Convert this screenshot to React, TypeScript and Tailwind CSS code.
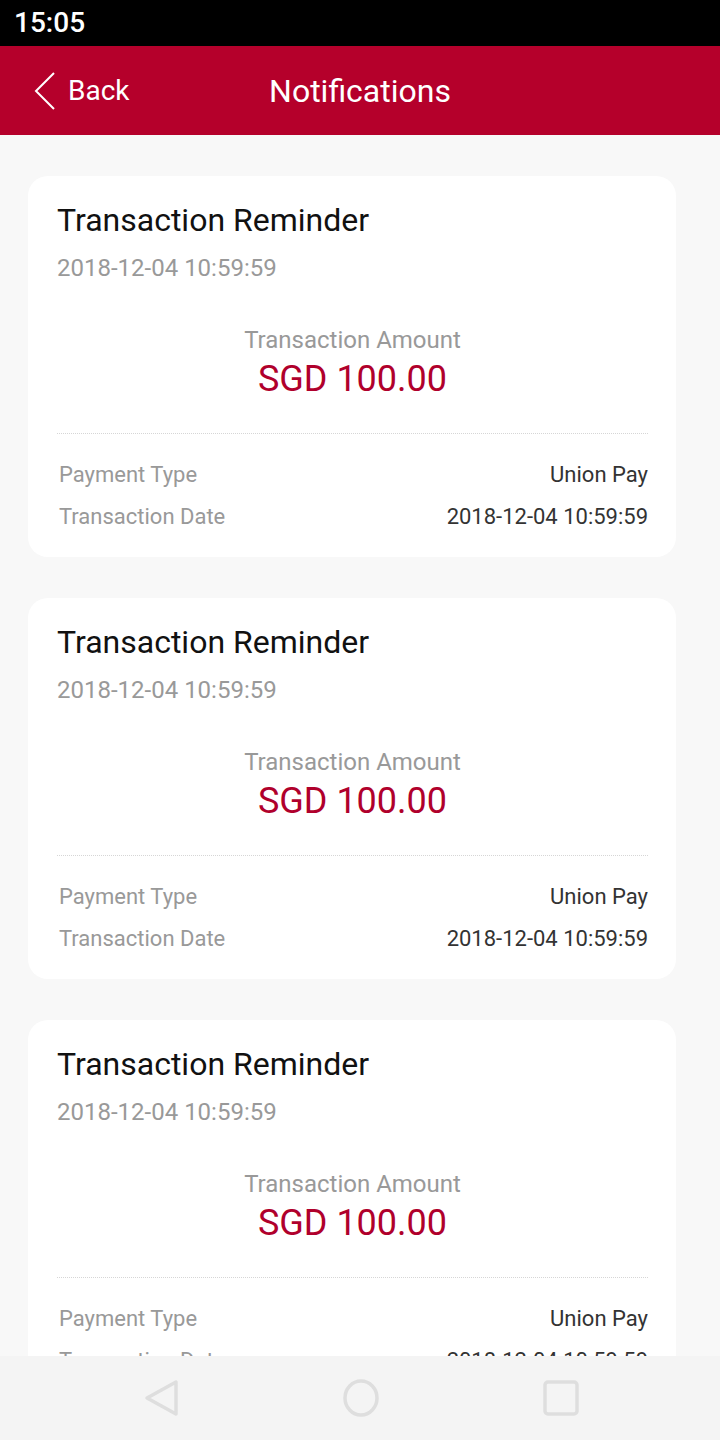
const notifications = [1, 2, 3];

const NotificationCard = () => {
  return (
    <div className="bg-white rounded-[20px] pt-[25px] pb-[26px] pl-[29px] pr-[28px]">
      <div className="text-[32px] leading-[38px] text-[#111]">Transaction Reminder</div>
      <div className="mt-[15px] text-[24px] leading-[28px] text-[#999]">2018-12-04 10:59:59</div>

      <div className="mt-[44px] flex flex-col items-center">
        <div className="text-[24px] leading-[28px] text-[#999]">Transaction Amount</div>
        <div className="mt-[4px] text-[36px] leading-[42px] text-[#b0002c]">SGD 100.00</div>
      </div>

      <div className="mt-[33px] border-t border-dotted border-[#d6d6d6]" />

      <div className="mt-[27px] flex justify-between text-[22px] leading-[28px] pl-[2px]">
        <span className="text-[#999]">Payment Type</span>
        <span className="text-[#333]">Union Pay</span>
      </div>
      <div className="mt-[14px] flex justify-between text-[22px] leading-[28px] pl-[2px]">
        <span className="text-[#999]">Transaction Date</span>
        <span className="text-[#333]">2018-12-04 10:59:59</span>
      </div>
    </div>
  );
};

const App = () => {
  return (
    <div
      className="w-[720px] h-[1440px] flex flex-col bg-[#f8f8f8] overflow-hidden"
      style={{ fontFamily: "Roboto, 'Liberation Sans', sans-serif" }}
    >
      {/* status bar */}
      <div className="h-[46px] bg-black flex items-center px-[14px] shrink-0">
        <span className="text-white text-[28px] font-medium leading-none">15:05</span>
      </div>

      {/* header */}
      <header className="relative h-[89px] bg-[#b5002b] flex items-center shrink-0">
        <div className="flex items-center pl-[34px] text-white">
          <svg width="22" height="38" viewBox="0 0 22 38" fill="none">
            <path d="M20 1 L2 19 L20 37" stroke="white" strokeWidth="2" />
          </svg>
          <span className="ml-[12px] text-[28px]">Back</span>
        </div>
        <div className="absolute left-0 right-0 text-center text-white text-[32px] pointer-events-none">
          Notifications
        </div>
      </header>

      {/* list */}
      <main className="flex-1 overflow-hidden pt-[41px] pl-[28px] pr-[44px] flex flex-col gap-[41px]">
        {notifications.map((n) => (
          <NotificationCard key={n} />
        ))}
      </main>

      {/* nav bar */}
      <nav className="h-[84px] bg-[#f4f4f4] flex items-center justify-between shrink-0 pl-[143px] pr-[141px]">
        <svg width="36" height="38" viewBox="0 0 36 38" fill="none">
          <path
            d="M33 3 L33 35 L4 19 Z"
            stroke="#dedede"
            strokeWidth="3.5"
            strokeLinejoin="round"
          />
        </svg>
        <svg width="38" height="38" viewBox="0 0 38 38" fill="none">
          <ellipse cx="19" cy="19" rx="16" ry="17" stroke="#dedede" strokeWidth="3.5" />
        </svg>
        <svg width="36" height="36" viewBox="0 0 36 36" fill="none">
          <rect x="2" y="2" width="32" height="32" rx="3" stroke="#dedede" strokeWidth="3.5" />
        </svg>
      </nav>
    </div>
  );
};

export default App;
